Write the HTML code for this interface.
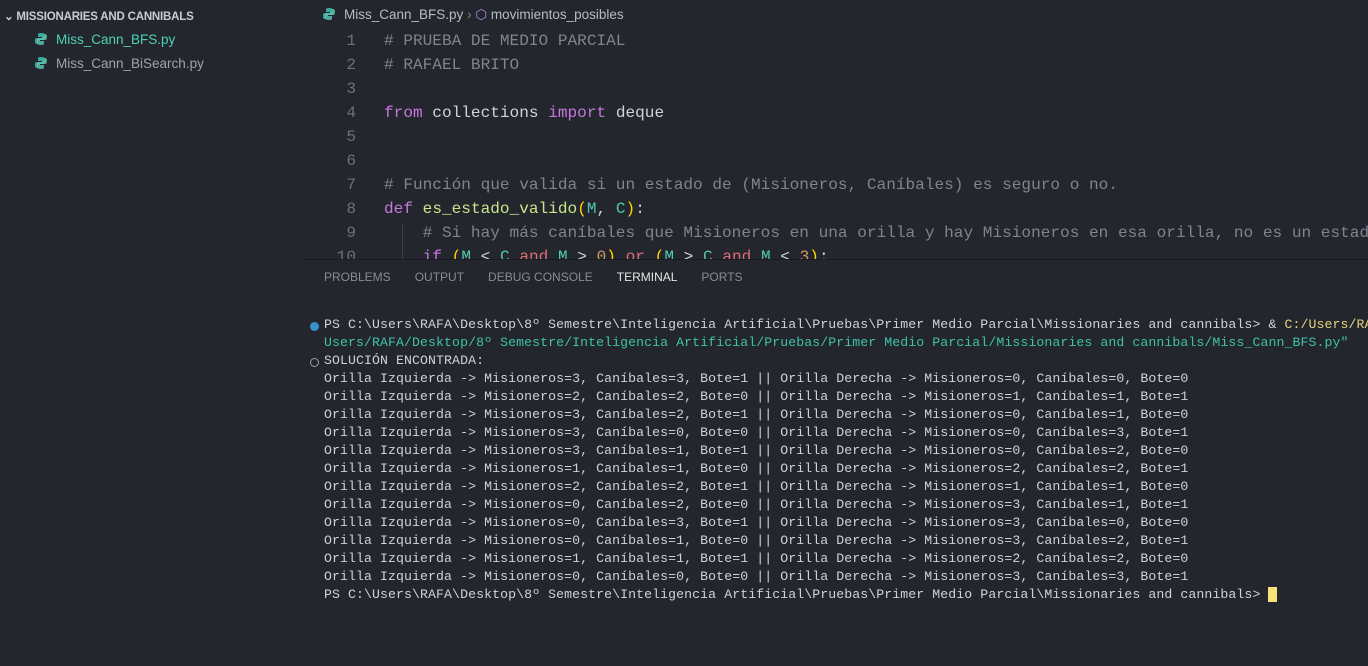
<!DOCTYPE html>
<html><head><meta charset="utf-8"><style>
body{margin:0;width:1368px;height:665px;background:#23262d;overflow:hidden;font-family:"Liberation Sans",sans-serif;position:relative}
.side{position:absolute;left:0;top:0;width:302px;height:665px;background:#23262d}
.side .h{position:absolute;left:4px;top:9px;font-size:11.5px;font-weight:bold;color:#c8ccd4;letter-spacing:-0.2px}
.file{position:absolute;left:34px;font-size:13.5px;color:#9da3ad}
.py{display:inline-block;width:14px;height:14px;vertical-align:-2px;margin-right:8px}
.crumb{position:absolute;left:322px;top:7px;font-size:13.5px;color:#b6bcc6}
.code{position:absolute;left:302px;top:30px;width:1066px;height:229px;overflow:hidden;font-family:"Liberation Mono",monospace;font-size:16.1px}
.ln{position:absolute;left:0;width:54px;text-align:right;color:#6b717c}
.tx{position:absolute;left:82px;white-space:pre;color:#d0d4da}
.c{color:#7f848e}.k{color:#c678dd}.f{color:#c9e58a}.y{color:#ffd700}.t{color:#4ec9b0}.r{color:#e06c75}.o{color:#d19a66}
.panel{position:absolute;left:302px;top:259px;width:1066px;height:406px;background:#23262d;border-top:1px solid #191b20}
.tabs{position:absolute;top:10px;left:22px;font-size:12px;color:#868c96;white-space:nowrap}
.tabs span{margin-right:24px}
.term{position:absolute;left:22px;top:56px;font-family:"Liberation Mono",monospace;font-size:13.2px;letter-spacing:0.09px;line-height:18px;color:#cfd3d8;white-space:pre}
.dot{position:absolute;left:8px;width:9px;height:9px;border-radius:50%}
</style></head><body>
<div class="side">
<div class="h">⌄ MISSIONARIES AND CANNIBALS</div>
<div class="file" style="top:32px;color:#4fd1b6"><svg class="py" viewBox="0 0 14 14"><path d="M7 1C4 1 4 2 4 3v2h4v1H3C1 6 1 8 1 9s0 3 2 3h1v-2c0-1 1-2 2-2h3c1 0 2-1 2-2V3c0-1-1-2-4-2z" fill="#3aa99a"/><path d="M7 13c3 0 3-1 3-2V9H6V8h5c2 0 2-2 2-3s0-3-2-3h-1v2c0 1-1 2-2 2H5c-1 0-2 1-2 2v3c0 1 1 2 4 2z" fill="#5fc8b5" opacity=".8"/></svg>Miss_Cann_BFS.py</div>
<div class="file" style="top:56px"><svg class="py" viewBox="0 0 14 14"><path d="M7 1C4 1 4 2 4 3v2h4v1H3C1 6 1 8 1 9s0 3 2 3h1v-2c0-1 1-2 2-2h3c1 0 2-1 2-2V3c0-1-1-2-4-2z" fill="#3aa99a"/><path d="M7 13c3 0 3-1 3-2V9H6V8h5c2 0 2-2 2-3s0-3-2-3h-1v2c0 1-1 2-2 2H5c-1 0-2 1-2 2v3c0 1 1 2 4 2z" fill="#5fc8b5" opacity=".8"/></svg>Miss_Cann_BiSearch.py</div>
</div>
<div class="crumb"><svg class="py" viewBox="0 0 14 14"><path d="M7 1C4 1 4 2 4 3v2h4v1H3C1 6 1 8 1 9s0 3 2 3h1v-2c0-1 1-2 2-2h3c1 0 2-1 2-2V3c0-1-1-2-4-2z" fill="#3aa99a"/><path d="M7 13c3 0 3-1 3-2V9H6V8h5c2 0 2-2 2-3s0-3-2-3h-1v2c0 1-1 2-2 2H5c-1 0-2 1-2 2v3c0 1 1 2 4 2z" fill="#5fc8b5" opacity=".8"/></svg>Miss_Cann_BFS.py <span style="color:#888">›</span> <span style="color:#b58ce0">⬡</span> movimientos_posibles</div>
<div class="code">
<div class="ln" style="top:2px">1</div><div class="tx c" style="top:2px"># PRUEBA DE MEDIO PARCIAL</div>
<div class="ln" style="top:26px">2</div><div class="tx c" style="top:26px"># RAFAEL BRITO</div>
<div class="ln" style="top:50px">3</div>
<div class="ln" style="top:74px">4</div><div class="tx" style="top:74px"><span class="k">from</span> collections <span class="k">import</span> deque</div>
<div class="ln" style="top:98px">5</div>
<div class="ln" style="top:122px">6</div>
<div class="ln" style="top:146px">7</div><div class="tx c" style="top:146px"># Función que valida si un estado de (Misioneros, Caníbales) es seguro o no.</div>
<div class="ln" style="top:170px">8</div><div class="tx" style="top:170px"><span class="k">def</span> <span class="f">es_estado_valido</span><span class="y">(</span><span class="t">M</span>, <span class="t">C</span><span class="y">)</span>:</div>
<div class="ln" style="top:194px">9</div><div class="tx c" style="top:194px">    # Si hay más caníbales que Misioneros en una orilla y hay Misioneros en esa orilla, no es un estado válido</div>
<div class="ln" style="top:218px">10</div><div class="tx" style="top:218px">    <span class="k">if</span> <span class="y">(</span><span class="t">M</span> &lt; <span class="t">C</span> <span class="r">and</span> <span class="t">M</span> &gt; <span class="o">0</span><span class="y">)</span> <span class="r">or</span> <span class="y">(</span><span class="t">M</span> &gt; <span class="t">C</span> <span class="r">and</span> <span class="t">M</span> &lt; <span class="o">3</span><span class="y">)</span>:</div>
<div style="position:absolute;left:100px;top:194px;width:1px;height:40px;background:#3b3f47"></div>
</div>
<div class="panel">
<div class="tabs"><span>PROBLEMS</span><span>OUTPUT</span><span>DEBUG CONSOLE</span><span style="color:#e6e6e6">TERMINAL</span><span>PORTS</span></div>
<div class="dot" style="top:62px;background:#3794c9"></div>
<div class="dot" style="top:98px;border:1px solid #9aa0a8;width:7px;height:7px"></div>
<div class="term">PS C:\Users\RAFA\Desktop\8º Semestre\Inteligencia Artificial\Pruebas\Primer Medio Parcial\Missionaries and cannibals&gt; &amp; <span style="color:#e5d27a">C:/Users/RAFA</span>
<span style="color:#3fc2a6">Users/RAFA/Desktop/8º Semestre/Inteligencia Artificial/Pruebas/Primer Medio Parcial/Missionaries and cannibals/Miss_Cann_BFS.py"</span>
SOLUCIÓN ENCONTRADA:
Orilla Izquierda -&gt; Misioneros=3, Caníbales=3, Bote=1 || Orilla Derecha -&gt; Misioneros=0, Caníbales=0, Bote=0
Orilla Izquierda -&gt; Misioneros=2, Caníbales=2, Bote=0 || Orilla Derecha -&gt; Misioneros=1, Caníbales=1, Bote=1
Orilla Izquierda -&gt; Misioneros=3, Caníbales=2, Bote=1 || Orilla Derecha -&gt; Misioneros=0, Caníbales=1, Bote=0
Orilla Izquierda -&gt; Misioneros=3, Caníbales=0, Bote=0 || Orilla Derecha -&gt; Misioneros=0, Caníbales=3, Bote=1
Orilla Izquierda -&gt; Misioneros=3, Caníbales=1, Bote=1 || Orilla Derecha -&gt; Misioneros=0, Caníbales=2, Bote=0
Orilla Izquierda -&gt; Misioneros=1, Caníbales=1, Bote=0 || Orilla Derecha -&gt; Misioneros=2, Caníbales=2, Bote=1
Orilla Izquierda -&gt; Misioneros=2, Caníbales=2, Bote=1 || Orilla Derecha -&gt; Misioneros=1, Caníbales=1, Bote=0
Orilla Izquierda -&gt; Misioneros=0, Caníbales=2, Bote=0 || Orilla Derecha -&gt; Misioneros=3, Caníbales=1, Bote=1
Orilla Izquierda -&gt; Misioneros=0, Caníbales=3, Bote=1 || Orilla Derecha -&gt; Misioneros=3, Caníbales=0, Bote=0
Orilla Izquierda -&gt; Misioneros=0, Caníbales=1, Bote=0 || Orilla Derecha -&gt; Misioneros=3, Caníbales=2, Bote=1
Orilla Izquierda -&gt; Misioneros=1, Caníbales=1, Bote=1 || Orilla Derecha -&gt; Misioneros=2, Caníbales=2, Bote=0
Orilla Izquierda -&gt; Misioneros=0, Caníbales=0, Bote=0 || Orilla Derecha -&gt; Misioneros=3, Caníbales=3, Bote=1
PS C:\Users\RAFA\Desktop\8º Semestre\Inteligencia Artificial\Pruebas\Primer Medio Parcial\Missionaries and cannibals&gt; <span style="background:#f5e27a">&#8202; </span></div>
</div>
</body></html>
